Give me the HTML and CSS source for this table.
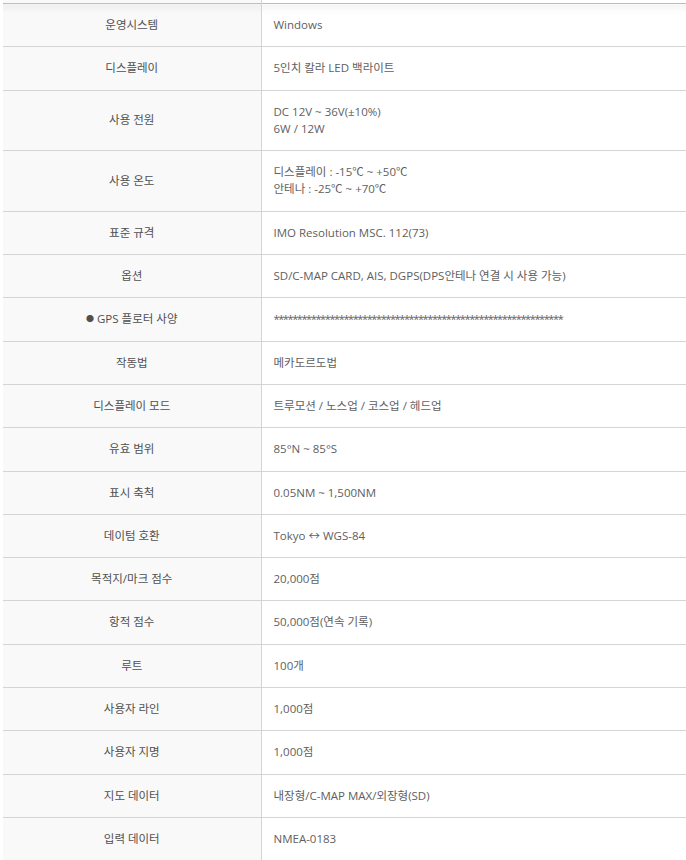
FILE: index.html
```html
<!DOCTYPE html>
<html lang="ko">
<head>
<meta charset="utf-8">
<link rel="stylesheet" href="styles.css">
</head>
<body>
<div class="wrap">
<table class="spec">
<colgroup><col class="c-label"><col class="c-value"></colgroup>
<tbody>
<tr class="stub"><th></th><td></td></tr>
<tr class="first"><th>운영시스템</th><td>Windows</td></tr>
<tr><th>디스플레이</th><td>5인치 칼라 LED 백라이트</td></tr>
<tr><th>사용 전원</th><td>DC 12V ~ 36V(±10%)<br>6W / 12W</td></tr>
<tr><th>사용 온도</th><td>디스플레이 : -15℃ ~ +50℃<br>안테나 : -25℃ ~ +70℃</td></tr>
<tr><th>표준 규격</th><td>IMO Resolution MSC. 112(73)</td></tr>
<tr><th>옵션</th><td>SD/C-MAP CARD, AIS, DGPS(DPS안테나 연결 시 사용 가능)</td></tr>
<tr><th><span class="dot">●</span> GPS 플로터 사양</th><td class="stars">**************************************************************</td></tr>
<tr><th>작동법</th><td>메카도르도법</td></tr>
<tr><th>디스플레이 모드</th><td>트루모션 / 노스업 / 코스업 / 헤드업</td></tr>
<tr><th>유효 범위</th><td>85°N ~ 85°S</td></tr>
<tr><th>표시 축척</th><td>0.05NM ~ 1,500NM</td></tr>
<tr><th>데이텀 호환</th><td>Tokyo ↔ WGS-84</td></tr>
<tr><th>목적지/마크 점수</th><td>20,000점</td></tr>
<tr><th>항적 점수</th><td>50,000점(연속 기록)</td></tr>
<tr><th>루트</th><td>100개</td></tr>
<tr><th>사용자 라인</th><td>1,000점</td></tr>
<tr><th>사용자 지명</th><td>1,000점</td></tr>
<tr><th>지도 데이터</th><td>내장형/C-MAP MAX/외장형(SD)</td></tr>
<tr><th>입력 데이터</th><td>NMEA-0183</td></tr>
</tbody>
</table>
</div>
</body>
</html>
```
FILE: styles.css
```css
html, body {
  margin: 0;
  padding: 0;
  background: #fff;
}
body {
  font-family: "Open Sans", "Noto Sans CJK KR", sans-serif;
  font-size: 11.5px;
  overflow: hidden;
}
.wrap {
  padding-left: 3px;
}
.spec {
  width: 683px;
  border-collapse: collapse;
  table-layout: fixed;
}
.c-label { width: 258px; }
.spec th,
.spec td {
  border-top: 1px solid #d4d4d4;
  padding: 12px 12px 13px 12px;
  line-height: 17.3px;
  height: 17.3px;
  vertical-align: middle;
}
.spec th {
  background: #f9f9f9;
  color: #505050;
  font-weight: normal;
  text-align: center;
  border-right: 1px solid #d4d4d4;
}
.spec td {
  color: #606060;
  text-align: left;
}
.spec tr.stub th,
.spec tr.stub td {
  padding: 0;
  height: 3px;
  line-height: 0;
  border-top: 0;
}
.spec tr.first th,
.spec tr.first td {
  border-top: 1px solid #bdbdbd;
  background-image: linear-gradient(to bottom, rgba(0,0,0,0.045), rgba(0,0,0,0) 9px);
}
.spec tr.first th {
  background-color: #f9f9f9;
}
.dot {
  font-size: 8px;
  vertical-align: 1px;
}
.stars {
  font-size: 11px;
  letter-spacing: -1.4px;
}
```
